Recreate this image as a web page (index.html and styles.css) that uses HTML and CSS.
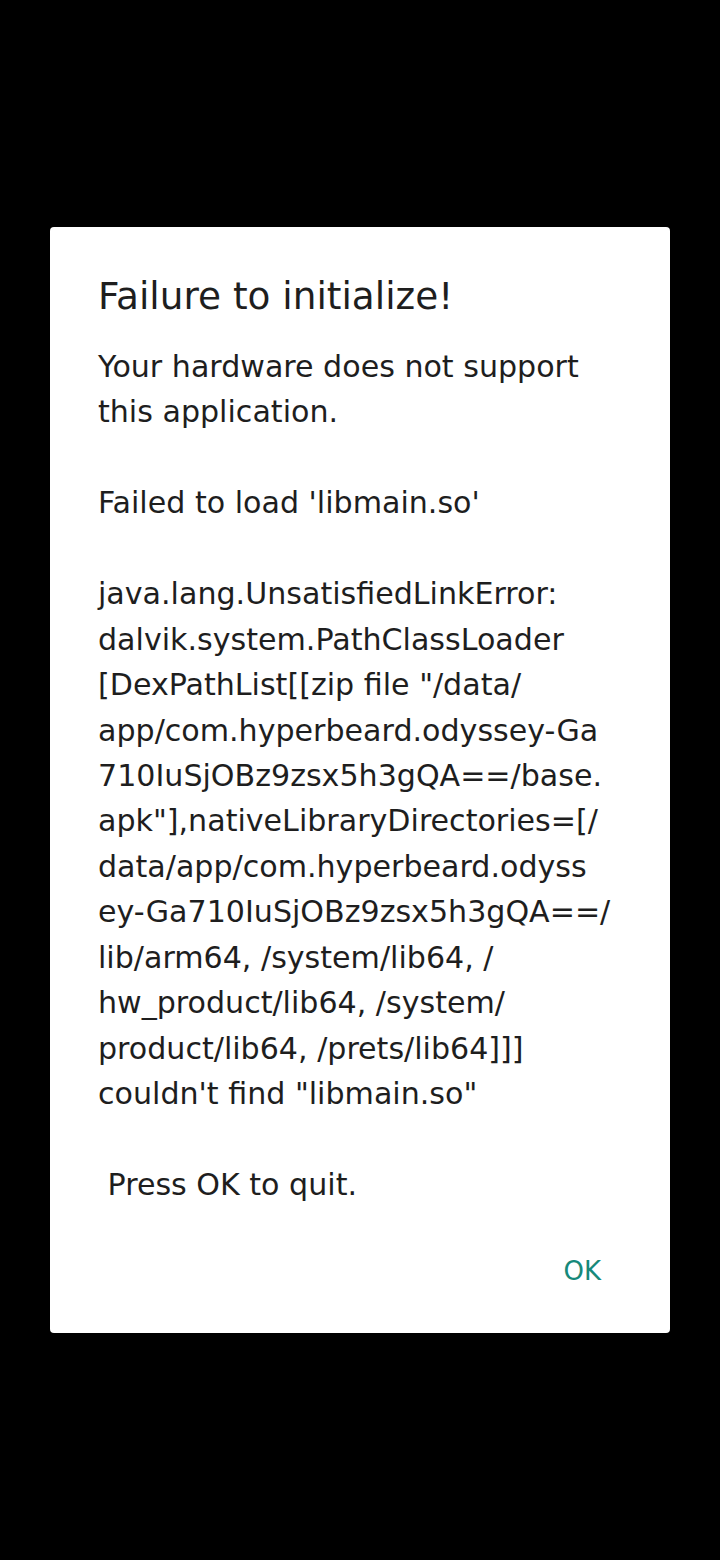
FILE: index.html
```html
<!DOCTYPE html>
<html lang="en">
<head>
<meta charset="utf-8">
<title>Failure to initialize!</title>
<link rel="stylesheet" href="styles.css">
</head>
<body>
<div class="dialog">
  <div class="title">Failure to initialize!</div>
  <div class="message">
    <div class="line">Your hardware does not support</div>
    <div class="line">this application.</div>
    <div class="line"> </div>
    <div class="line">Failed to load 'libmain.so'</div>
    <div class="line"> </div>
    <div class="line">java.lang.UnsatisfiedLinkError:</div>
    <div class="line">dalvik.system.PathClassLoader</div>
    <div class="line">[DexPathList[[zip file "/data/</div>
    <div class="line">app/com.hyperbeard.odyssey-Ga</div>
    <div class="line">710IuSjOBz9zsx5h3gQA==/base.</div>
    <div class="line">apk"],nativeLibraryDirectories=[/</div>
    <div class="line">data/app/com.hyperbeard.odyss</div>
    <div class="line">ey-Ga710IuSjOBz9zsx5h3gQA==/</div>
    <div class="line">lib/arm64, /system/lib64, /</div>
    <div class="line">hw_product/lib64, /system/</div>
    <div class="line">product/lib64, /prets/lib64]]]</div>
    <div class="line">couldn't find "libmain.so"</div>
    <div class="line"> </div>
    <div class="line"> Press OK to quit.</div>
  </div>
  <div class="actions">
    <button class="btn">OK</button>
  </div>
</div>
</body>
</html>
```

FILE: styles.css
```css
html, body {
  margin: 0;
  padding: 0;
}
body {
  background: #000;
  width: 720px;
  height: 1560px;
  display: flex;
  justify-content: center;
  align-items: flex-start;
  padding-top: 227px;
  box-sizing: border-box;
  font-family: "DejaVu Sans", "Liberation Sans", sans-serif;
}
.dialog {
  width: 620px;
  background: #fff;
  border-radius: 4px;
  padding: 47px 48px 44px 48px;
  box-sizing: border-box;
  display: flex;
  flex-direction: column;
  color: #1e1e1e;
}
.title {
  font-size: 37.4px;
  line-height: 44px;
  margin-bottom: 26px;
  white-space: nowrap;
}
.message {
  font-size: 30.1px;
  line-height: 45.45px;
}
.line {
  white-space: pre;
  height: 45.45px;
}
.actions {
  display: flex;
  justify-content: flex-end;
  margin-top: 46px;
}
.btn {
  font-family: inherit;
  font-size: 26px;
  line-height: 36px;
  height: 36px;
  padding: 0 21px 0 0;
  border: 0;
  background: transparent;
  color: #16897a;
}
```
